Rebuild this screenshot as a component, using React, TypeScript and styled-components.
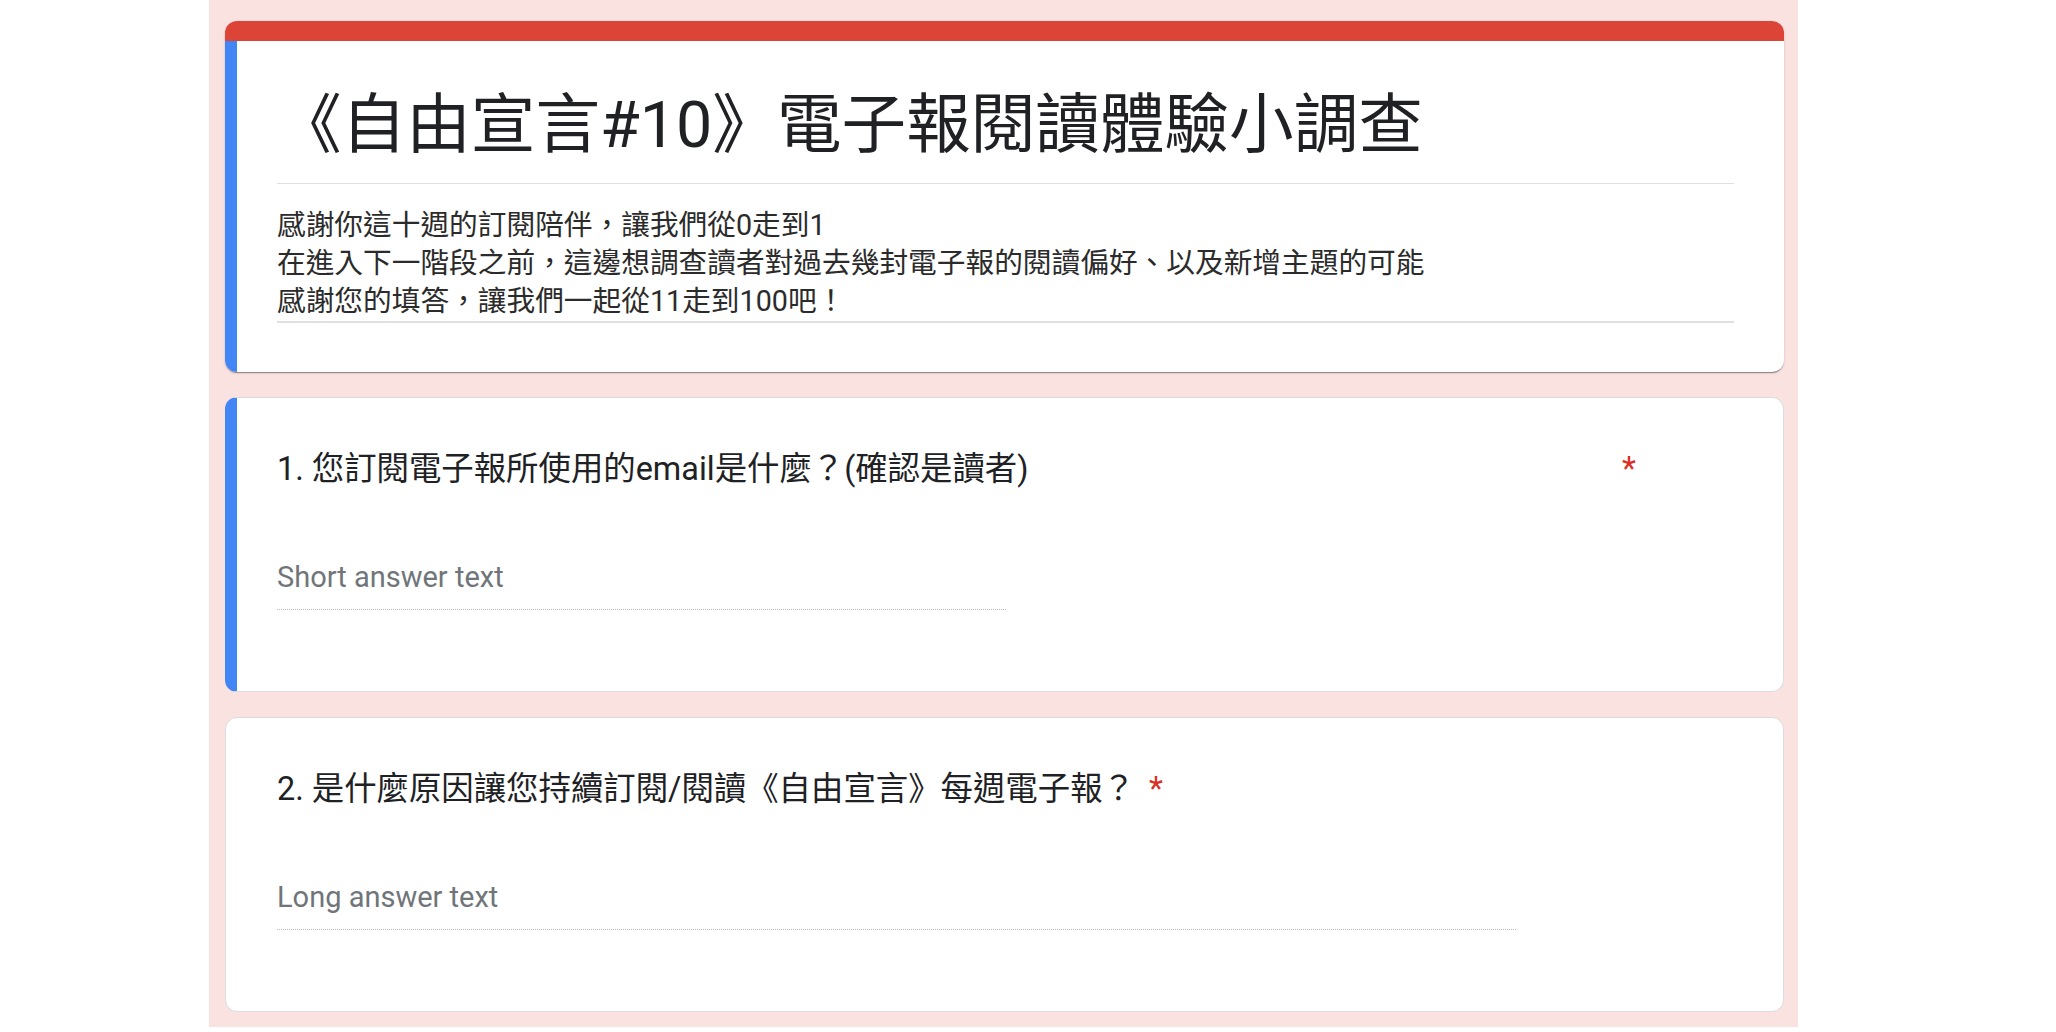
import React from "react";
import styled, { createGlobalStyle } from "styled-components";

const GlobalStyle = createGlobalStyle`
  html, body {
    margin: 0;
    padding: 0;
    background: #ffffff;
  }
  body {
    font-family: Roboto, "Noto Sans CJK TC", sans-serif;
    color: #202124;
  }
`;

const Canvas = styled.main`
  width: 1589px;
  height: 1027px;
  margin-left: 209px;
  box-sizing: border-box;
  background: #fae2e1;
  padding: 21px 14px 0 16px;
  display: flex;
  flex-direction: column;
  gap: 25px;
`;

const HeaderCard = styled.section`
  background: #ffffff;
  border-radius: 12px;
  overflow: hidden;
  box-shadow: 0 2px 1px -1px rgba(0, 0, 0, 0.25), 0 1px 1px 0 rgba(0, 0, 0, 0.16),
    0 1px 3px 0 rgba(0, 0, 0, 0.12);
`;

const TopBar = styled.div`
  height: 20px;
  background: #db4437;
`;

const HeaderBody = styled.div`
  border-left: 12px solid #4285f4;
  padding: 44px 50px 49px 40px;
`;

const Title = styled.h1`
  margin: 0;
  font-size: 64.6px;
  font-weight: 400;
  line-height: 80px;
  color: #202124;
  padding-bottom: 18px;
  border-bottom: 1px solid #e0e0e0;
  white-space: nowrap;
`;

const Description = styled.div`
  margin-top: 22px;
  font-size: 28.7px;
  line-height: 38px;
  color: #2b2b2b;
  padding-bottom: 1px;
  border-bottom: 2px solid #e0e0e0;
`;

const DescLine = styled.div`
  white-space: nowrap;
`;

const QuestionCard = styled.section<{ $accent?: boolean }>`
  background: #ffffff;
  border-radius: 12px;
  border: 1px solid #dadce0;
  border-left: ${(p) => (p.$accent ? "12px solid #4285f4" : "1px solid #dadce0")};
  padding: 51px 40px 81px ${(p) => (p.$accent ? "40px" : "51px")};
`;

const QuestionRow = styled.div<{ $spread?: boolean }>`
  display: flex;
  align-items: flex-start;
  justify-content: ${(p) => (p.$spread ? "space-between" : "flex-start")};
  width: ${(p) => (p.$spread ? "1359px" : "auto")};
  font-size: 32.4px;
  line-height: 40px;
  color: #202124;
  white-space: nowrap;
`;

const Required = styled.span<{ $gap?: number }>`
  color: #d93025;
  font-family: Roboto, sans-serif;
  margin-left: ${(p) => p.$gap ?? 0}px;
`;

const AnswerField = styled.div<{ $width: number }>`
  margin-top: 70px;
  width: ${(p) => p.$width}px;
  font-size: 29px;
  line-height: 36px;
  color: #70757a;
  padding-bottom: 14px;
  border-bottom: 1px dotted #bcbcbc;
`;

export default function App() {
  return (
    <>
      <GlobalStyle />
      <Canvas>
        <HeaderCard>
          <TopBar />
          <HeaderBody>
            <Title>《自由宣言#10》電子報閱讀體驗小調查</Title>
            <Description>
              <DescLine>感謝你這十週的訂閱陪伴，讓我們從0走到1</DescLine>
              <DescLine>在進入下一階段之前，這邊想調查讀者對過去幾封電子報的閱讀偏好、以及新增主題的可能</DescLine>
              <DescLine>感謝您的填答，讓我們一起從11走到100吧！</DescLine>
            </Description>
          </HeaderBody>
        </HeaderCard>

        <QuestionCard $accent>
          <QuestionRow $spread>
            <span>1. 您訂閱電子報所使用的email是什麼？(確認是讀者)</span>
            <Required>*</Required>
          </QuestionRow>
          <AnswerField $width={729}>Short answer text</AnswerField>
        </QuestionCard>

        <QuestionCard>
          <QuestionRow>
            <span>2. 是什麼原因讓您持續訂閱/閱讀《自由宣言》每週電子報？</span>
            <Required $gap={14}>*</Required>
          </QuestionRow>
          <AnswerField $width={1239}>Long answer text</AnswerField>
        </QuestionCard>
      </Canvas>
    </>
  );
}
